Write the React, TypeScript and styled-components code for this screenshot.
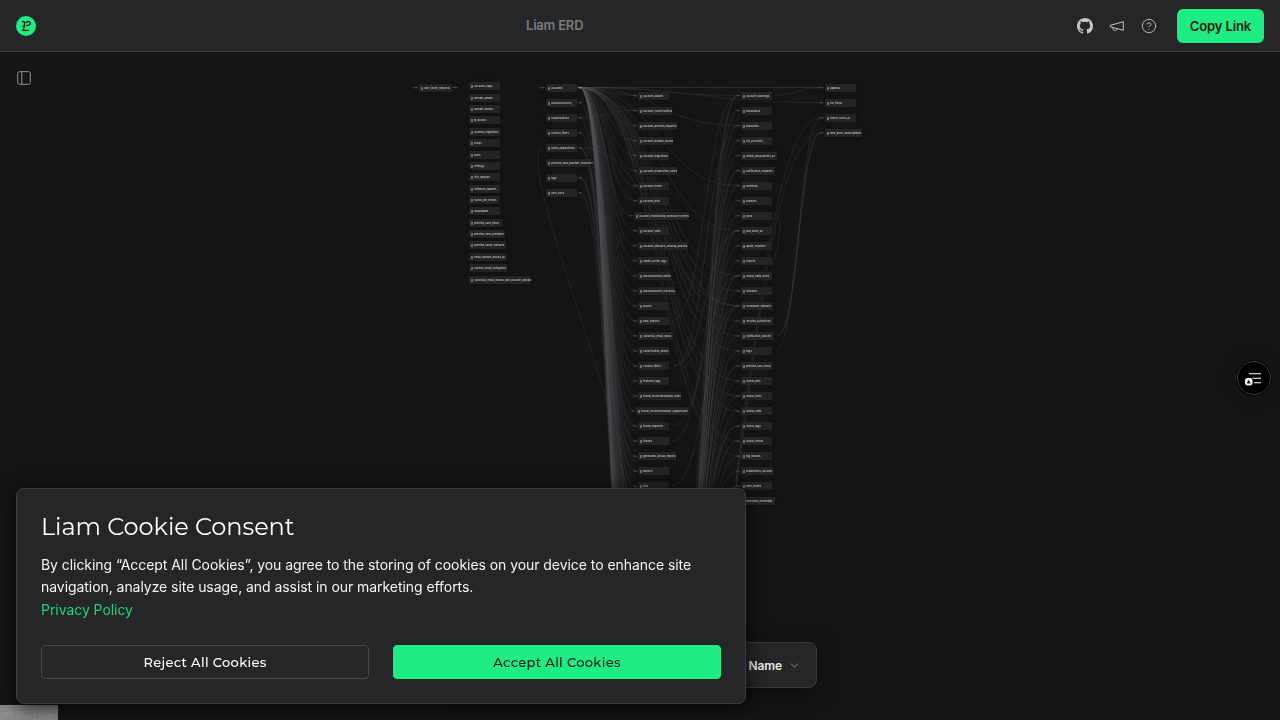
import React from "react";
import styled, { createGlobalStyle } from "styled-components";
import { CircleHelp, ChevronDown } from "lucide-react";

const GlobalStyle = createGlobalStyle`
  * { box-sizing: border-box; }
  body { margin: 0; background: #141616; font-family: Inter, "Liberation Sans", sans-serif; color: #fff; overflow: hidden; }
  button { font: inherit; cursor: pointer; }
`;

const Page = styled.div`
  height: 720px;
  display: flex;
  flex-direction: column;
  position: relative;
  overflow: hidden;
`;
const Header = styled.header`
  height: 52px;
  flex: none;
  display: grid;
  grid-template-columns: 510px 1fr auto;
  align-items: center;
  padding: 0 16px;
  background: #252628;
  border-bottom: 1px solid #3c3d3f;
`;
const Title = styled.h1`
  margin: 0;
  padding-bottom: 1px;
  font-size: 13px;
  line-height: 20px;
  font-weight: 600;
  letter-spacing: -0.2px;
  color: #7a7b7c;
`;
const Actions = styled.div`
  display: flex;
  align-items: center;
  gap: 16px;
  color: #c4c5c6;
  svg { display: block; }
`;
const CopyButton = styled.button`
  height: 34px;
  width: 87px;
  margin-left: 4px;
  padding: 0;
  border: 0;
  border-radius: 6px;
  background: #1ded83;
  color: #0b1712;
  font-size: 13px;
  font-weight: 600;
  letter-spacing: -0.12px;
  white-space: nowrap;
`;
const Canvas = styled.main`
  position: relative;
  flex: 1;
`;
const PanelToggle = styled.div`
  padding: 18px 16px;
  color: #929394;
  svg { display: block; }
`;
const Edges = styled.svg`
  position: absolute;
  inset: 0;
`;
const Node = styled.div<{ $x: number; $y: number; $w: number }>`
  position: absolute;
  left: ${(p) => p.$x}px;
  top: ${(p) => p.$y - 55.9}px;
  width: ${(p) => p.$w}px;
  height: 8px;
  display: flex;
  align-items: center;
  gap: 1px;
  padding-left: 2.2px;
  border-radius: 1px;
  background: #232426;
  box-shadow: 0 0 4px rgba(0, 0, 0, 0.35);
  color: #b4b5b6;
  font-size: 2.6px;
  font-weight: 700;
  letter-spacing: -0.03px;
  line-height: 3px;
  white-space: nowrap;
  will-change: transform;
`;
const NodeIcon = styled.i`
  flex: none;
  width: 2px;
  height: 3px;
  background: #6c6d6f;
`;
const Attribution = styled.div`
  position: absolute;
  left: 0;
  bottom: 0;
  height: 15px;
  width: 58px;
  padding: 2px 3px;
  background: rgba(255, 255, 255, 0.5);
  color: #999;
  font-size: 10px;
  line-height: 12px;
  white-space: nowrap;
`;
const Toolbar = styled.div`
  position: absolute;
  left: 463px;
  top: 590px;
  width: 354px;
  height: 46px;
  display: flex;
  align-items: center;
  justify-content: flex-end;
  gap: 6px;
  padding: 0 15px;
  border: 1px solid #3a3b3d;
  border-radius: 8px;
  background: #252628;
  box-shadow: 0 4px 20px rgba(0, 0, 0, 0.5);
  color: #e9eaea;
  font-size: 12px;
  font-weight: 600;
  letter-spacing: -0.1px;
`;
const Fab = styled.div`
  position: absolute;
  left: 1237px;
  top: 309px;
  width: 34px;
  height: 34px;
  border-radius: 50%;
  border: 1px solid #3a3b3b;
  background: #000;
  box-shadow: 0 0 0 1px #050505, 0 0 20px rgba(0, 0, 0, 0.15);
  svg { display: block; }
`;
const Dialog = styled.section`
  position: absolute;
  left: 16px;
  top: 488px;
  width: 730px;
  height: 216px;
  padding: 22px 24px 24px;
  border: 1px solid #3c3d3f;
  border-radius: 8px;
  background: #252628;
  box-shadow: 0 4px 20px rgba(0, 0, 0, 0.8);
`;
const DialogTitle = styled.h2`
  margin: 0 0 12px;
  font-family: Montserrat, Inter, sans-serif;
  font-size: 24px;
  line-height: 31px;
  font-weight: 400;
  letter-spacing: -0.06px;
  white-space: nowrap;
`;
const Copy = styled.p`
  margin: 0;
  font-size: 14px;
  line-height: 22.4px;
  letter-spacing: -0.055px;
  color: #f4f4f4;
`;
const Link = styled.a`
  color: #1dd478;
`;
const Buttons = styled.div`
  display: flex;
  gap: 24px;
  margin-top: 24px;
`;
const ConsentButton = styled.button<{ $primary?: boolean }>`
  flex: 1;
  height: 34px;
  border-radius: 4px;
  border: 1px solid ${(p) => (p.$primary ? "#1ded83" : "#47484a")};
  background: ${(p) => (p.$primary ? "#1ded83" : "transparent")};
  color: ${(p) => (p.$primary ? "#07140e" : "#fff")};
  font-family: Montserrat, Inter, sans-serif;
  font-size: 13px;
  font-weight: 500;
  letter-spacing: 0.33px;
`;

type Table = { x: number; y: number; w: number; name: string };

function column(x: number, y0: number, step: number, names: string[], wide: Record<number, number>, base = 31.3, shift: Record<number, number> = {}): Table[] {
  return names.map((name, i) => ({ x: shift[i] ?? x, y: y0 + step * i, w: wide[i] ?? base, name }));
}

const standalone = column(468.6, 86.2, 11.37,
  ["accounts_tags", "domain_allows", "domain_blocks", "ip_blocks", "schema_migrations", "relays", "rules", "settings", "site_uploads", "software_updates", "status_pin_trends", "unavailable", "preview_card_trend", "preview_card_providers", "preview_cards_statuses", "email_domain_blocks_all", "custom_emoji_categories", "canonical_email_blocks_and_account_domain"],
  { 12: 32.5, 13: 35.8, 14: 36.5, 15: 37.5, 16: 38, 17: 60.5 });
const roots = column(545.7, 87.6, 15.05,
  ["accounts", "announcements_", "conversations", "custom_filters", "oauth_applications", "preview_card_provider_statuses", "tags", "user_roles"],
  { 5: 44.5 });
const links = column(638.3, 95.5, 15.03,
  ["account_aliases", "account_conversations", "account_deletion_requests", "account_domain_blocks", "account_migrations", "account_moderation_notes", "account_notes", "account_pins", "account_relationship_severance_events", "account_stats", "account_statuses_cleanup_policies", "admin_action_logs", "announcement_mutes", "announcement_reactions", "blocks", "bulk_imports", "canonical_email_block", "conversation_mutes", "custom_filters", "featured_tags", "follow_recommendation_mute", "follow_recommendation_suppression", "follow_requests", "follows", "generated_annual_reports", "imports", "lists"],
  { 1: 34.4, 2: 39, 3: 35.3, 5: 38.7, 8: 55, 10: 49.5, 12: 32.5, 13: 36.5, 16: 34.5, 20: 43, 21: 53, 24: 38 }, 31, { 8: 634.3, 21: 635.8 });
const details = column(741.2, 95.5, 15.03,
  ["account_warnings", "bookmarks", "favourites", "list_accounts_", "media_attachments_all", "notification_requests", "mentions", "markers", "polls", "poll_votes_all", "quote_requests", "reports", "status_edits_trend", "statuses", "scheduled_statuses", "session_activations", "notification_policies", "tags", "preview_card_trend", "status_pins", "status_stats", "status_edits", "status_tags", "status_trends", "tag_follows", "tombstones_account", "user_invites", "webauthn_credential"],
  { 4: 35.5, 5: 34.3, 14: 32.3, 15: 32.3, 16: 32.7, 25: 32, 27: 33.5 });
const outer = column(824.7, 87.6, 15.05, ["appeals", "list_items", "report_notes_all", "web_push_subscriptions"], { 3: 37 });
const tables = [{ x: 418.5, y: 87.6, w: 33, name: "user_invite_requests" }, ...standalone, ...roots, ...links, ...details, ...outer];

const bezier = (sx: number, sy: number, tx: number, ty: number) => {
  const mx = (sx + tx) / 2;
  return `M${sx} ${sy}C${mx} ${sy} ${mx} ${ty} ${tx} ${ty}`;
};

const linkRows = Array.from({ length: 40 }, (_, i) => 95.3 + i * 15.03);
const edgePaths: string[] = [
  ...linkRows.map((y, i) => bezier(580, 87.6, i === 8 ? 631 : 635, y)),
  ...linkRows.slice(22).map((y) => bezier(580, 87.6, 635, y + 5)),
  ...[0, 2, 6, 9, 12, 13, 14, 15, 16, 17, 19, 20, 21, 23, 24].map((i) => bezier(580, 87.6, 738, 95.3 + i * 15.03)),
  bezier(580, 87.6, 821, 87.6),
  bezier(580, 87.6, 821, 87.6),
  bezier(580, 87.6, 821, 102.6),
  bezier(580, 117.8, 635, 110.3),
  ...[1, 2, 3].map((i) => bezier(580, 87.6 + 15.05 * i, 635, 620 + i * 20)),
  ...[500, 590, 650].map((y) => bezier(580, 147.8, 635, y)),
  bezier(580, 147.8, 738, 305.7),
  bezier(592, 162.8, 635, 530),
  ...[560, 620].map((y) => bezier(580, 178, 635, y)),
  bezier(580, 193, 635, 640),
  ...details.map((d, i) => bezier(672, i % 3 ? 651 : 681, 738, d.y)),
  ...[0, 5, 9, 12, 14, 18, 22, 26].map((i) => bezier(672, 621, 738, 95.3 + i * 15.03)),
  bezier(672, 320.8, 738, 95.3),
  bezier(674, 366, 738, 230.6),
  bezier(674, 366, 738, 125.4),
  bezier(672, 426, 738, 275.7),
  bezier(672, 441, 738, 230.6),
  bezier(672, 486, 738, 305.7),
  bezier(775, 95.3, 821, 87.6),
  bezier(777, 335.8, 821, 117.7),
  bezier(777, 335.8, 821, 132.7),
  bezier(775, 350.8, 821, 132.7),
  bezier(672, 690, 821, 117.7),
  bezier(672, 690, 821, 132.7),
  "M775 215.5C786 215.5 778 250 765 290C752 340 744 410 736 480",
  "M543 148C530 148 542 200 570 285C586 336 600 375 612 420",
];

function Marker({ x, y }: { x: number; y: number }) {
  return <path d={`M${x - 3} ${y}h5M${x - 1} ${y - 0.9}l2 .9l-2 .9`} stroke="#5d5e60" strokeWidth=".42" fill="none" />;
}

function Diagram() {
  return (
    <>
      <Edges width="1280" height="668" viewBox="0 52 1280 668" fill="none">
        <g stroke="#55565b" strokeWidth=".52" strokeOpacity=".46">
          {edgePaths.map((d, i) => <path key={i} d={d} />)}
        </g>
        <path d="M412 87.6h6M452 87.6h6M539 87.6h6" stroke="#434447" strokeWidth=".5" />
        {[...links, ...details, ...outer].map((t, i) => <Marker key={i} x={t.x - 2.7} y={t.y} />)}
        {roots.map((t, i) => <Marker key={i} x={t.x + t.w + 3} y={t.y} />)}
        {[416, 455, 543].map((x) => <Marker key={x} x={x} y={87.6} />)}
        <path d="M578 87.6h4" stroke="#6f8f80" strokeWidth="1.5" />
      </Edges>
      {tables.map((t, i) => (
        <Node key={i} $x={t.x} $y={t.y} $w={t.w}><NodeIcon />{t.name}</Node>
      ))}
    </>
  );
}

export default function App() {
  return (
    <Page>
      <GlobalStyle />
      <Header>
        <svg width="20" height="20" viewBox="0 0 20 20" fill="none">
          <circle cx="10" cy="10" r="10" fill="#1ded83" />
          <path d="M6.200 6.300C7.200 5.200 8.700 5.200 8.600 6.700C8.600 9.200 8.300 12 6.900 14.300H13.200M6.500 10.400L8.400 10.200M10.200 9.600C12.600 9.500 14.300 8.800 14.300 7.200C14.300 5 10.400 4.900 10.300 7" stroke="#07170f" strokeWidth="1.3" />
        </svg>
        <Title>Liam ERD</Title>
        <Actions>
          <svg width="16" height="16" viewBox="0 0 16 16" fill="currentColor">
            <path d="M8 0C3.58 0 0 3.58 0 8c0 3.54 2.29 6.53 5.47 7.59.4.07.55-.17.55-.38 0-.19-.01-.82-.01-1.49-2.01.37-2.53-.49-2.69-.94-.09-.23-.48-.94-.82-1.13-.28-.15-.68-.52-.01-.53.63-.01 1.08.58 1.23.82.72 1.21 1.87.87 2.33.66.07-.52.28-.87.51-1.07-1.78-.2-3.64-.89-3.64-3.95 0-.87.31-1.59.82-2.15-.08-.2-.36-1.02.08-2.12 0 0 .67-.21 2.2.82a7.6 7.6 0 0 1 4 0c1.53-1.04 2.2-.82 2.2-.82.44 1.1.16 1.92.08 2.12.51.56.82 1.27.82 2.15 0 3.07-1.87 3.75-3.65 3.95.29.25.54.73.54 1.48 0 1.07-.01 1.93-.01 2.2 0 .21.15.46.55.38A8.01 8.01 0 0 0 16 8c0-4.42-3.58-8-8-8z" />
          </svg>
          <svg width="16" height="16" viewBox="0 0 16 16" fill="none" stroke="currentColor" strokeLinejoin="round" strokeLinecap="round">
            <path d="M1.500 7.300L14.300 3.700v8.600L1.500 8.900zM4 9.800v1c0 2.300 3.800 2.600 4 .2" />
          </svg>
          <CircleHelp size={16} strokeWidth={1.35} />
          <CopyButton>Copy Link</CopyButton>
        </Actions>
      </Header>
      <Canvas>
        <PanelToggle>
          <svg width="16" height="16" viewBox="0 0 16 16" fill="none" stroke="currentColor">
            <rect x="1.7" y="1.7" width="12.6" height="12.6" rx="1.8" />
            <path d="M5.8 1.7v12.6" />
          </svg>
        </PanelToggle>
        <Diagram />
        <Attribution>React Flow</Attribution>
        <Toolbar>Name<ChevronDown size={13} strokeWidth={1.6} color="#9a9b9c" /></Toolbar>
        <Fab>
          <svg width="32" height="32" viewBox="0 0 32 32" fill="none">
            <path d="M11 11.700h12M14.500 16.200h8.500M16 20.700h7" stroke="#fff" strokeWidth="1.1" />
            <rect x="7" y="16" width="7.500" height="7.500" rx="3" fill="#fff" />
            <path d="M10.700 17.600l2 4h-4z" fill="#111" />
          </svg>
        </Fab>
      </Canvas>
      <Dialog>
        <DialogTitle>Liam Cookie Consent</DialogTitle>
        <Copy>By clicking “Accept All Cookies”, you agree to the storing of cookies on your device to enhance site navigation, analyze site usage, and assist in our marketing efforts.</Copy>
        <Copy><Link>Privacy Policy</Link></Copy>
        <Buttons>
          <ConsentButton>Reject All Cookies</ConsentButton>
          <ConsentButton $primary>Accept All Cookies</ConsentButton>
        </Buttons>
      </Dialog>
    </Page>
  );
}
